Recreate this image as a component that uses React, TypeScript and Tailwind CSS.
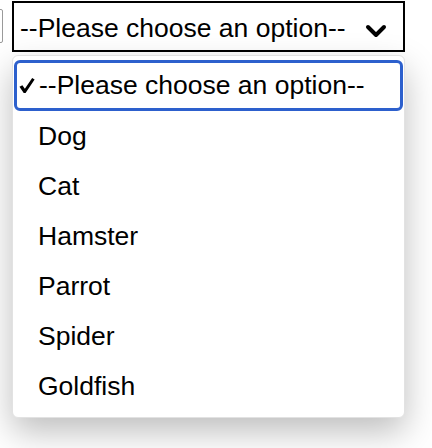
const items = ['Dog', 'Cat', 'Hamster', 'Parrot', 'Spider', 'Goldfish']

export default function App() {
  return (
    <div
      className="relative h-[448px] w-[432px] overflow-hidden bg-white text-black"
      style={{ fontFamily: '"Liberation Sans", Arial, sans-serif' }}
    >
      {/* stray control peeking in from the left */}
      <div className="absolute left-[-10px] top-[9px] h-[34px] w-[13px] rounded-r-[2px] border border-[#9a9a9a] bg-white" />

      <div className="ml-[12px] mt-[1px] flex h-[51px] w-[393px] items-center justify-between border-2 border-black bg-white pl-[6px] pr-[16px]">
        <span className="pt-[3px] text-[26.5px] leading-none">--Please choose an option--</span>
        <svg width="22" height="14" viewBox="0 0 22 14" className="mt-[8px]">
          <polyline points="3,3 11,11 19,3" fill="none" stroke="#000" strokeWidth="4" strokeLinecap="round" strokeLinejoin="round" />
        </svg>
      </div>

      <div className="absolute left-[12px] top-[55px] w-[393px] rounded-[6px] border border-[#e2e2e2] bg-white pb-[6px] pt-[4px] shadow-[0_14px_34px_rgba(0,0,0,0.26)]">
        <div className="mx-[1px] flex h-[51px] items-center rounded-[6px] border-[3px] border-[#2d60cd] pl-[2px]">
          <svg width="16" height="17" viewBox="0 0 17 17" className="mr-[4px]">
            <path d="M0.5 9.8 L3.6 8.2 L6.2 12 L14 0.6 L16.6 2 L7 16.6 L5 16.6 Z" fill="#000" />
          </svg>
          <span className="text-[26.5px] leading-none">--Please choose an option--</span>
        </div>
        {items.map((item) => (
          <div key={item} className="flex h-[50px] items-center pl-[25px] text-[26.5px] leading-none">
            {item}
          </div>
        ))}
      </div>
    </div>
  )
}
